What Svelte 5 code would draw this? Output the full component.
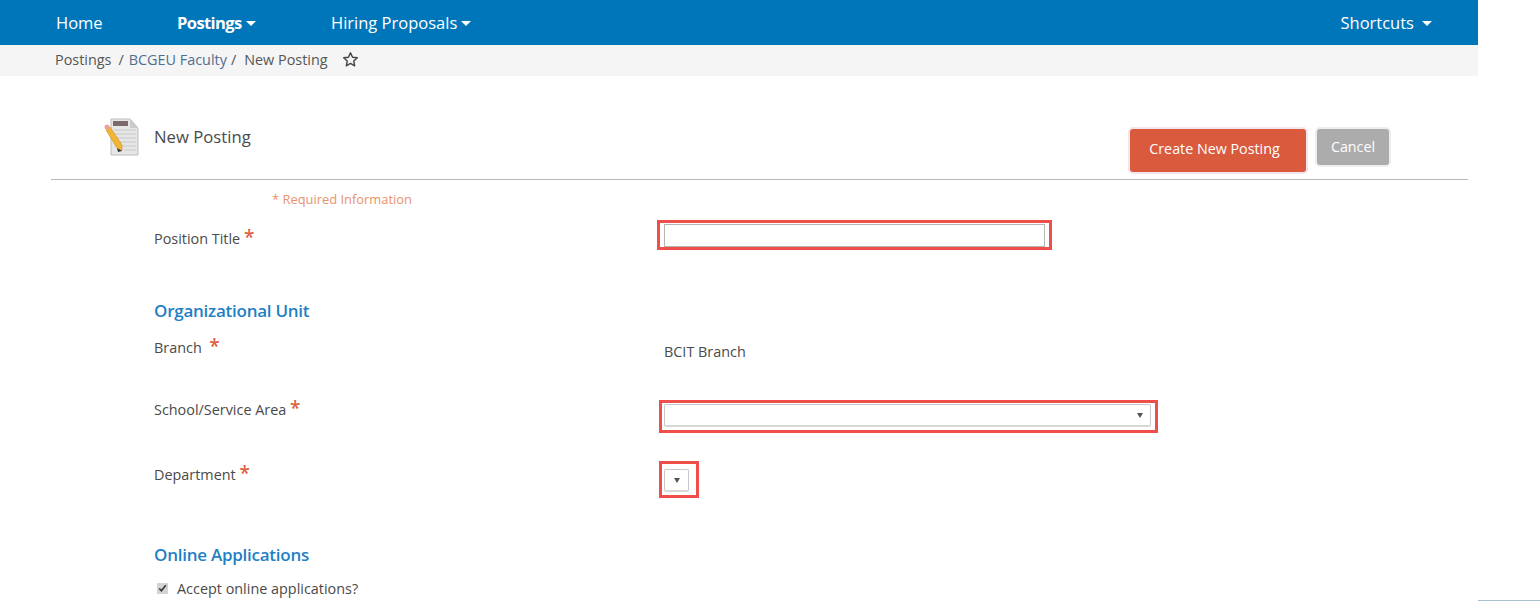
<script>
  let acceptOnline = true;
</script>

<div class="page">
  <main class="main">
    <nav class="topnav">
      <div class="nav-left">
        <a class="nav-home" href="#home">Home</a>
        <a class="nav-postings" href="#postings">Postings<span class="caret"></span></a>
        <a class="nav-hiring" href="#hiring">Hiring Proposals<span class="caret"></span></a>
      </div>
      <a class="nav-shortcuts" href="#shortcuts">Shortcuts<span class="caret wide"></span></a>
    </nav>

    <div class="breadcrumb">
      <span class="crumb">Postings</span>
      <span class="crumb sep">/</span>
      <span class="crumb link">BCGEU Faculty</span>
      <span class="crumb sep2">/</span>
      <span class="crumb current">New Posting</span>
      <svg class="star" viewBox="0 0 24 24" width="17" height="17" aria-hidden="true">
        <path d="M12 2.600l2.900 6.200 6.700.8-5 4.600 1.300 6.700L12 17.600l-5.900 3.300 1.300-6.700-5-4.600 6.700-.8z" fill="none" stroke="#444" stroke-width="2" stroke-linejoin="round" />
      </svg>
    </div>

    <header class="title-row">
      <div class="title">
        <svg class="doc-icon" viewBox="0 0 36 38" width="36" height="38" aria-hidden="true">
          <path d="M8 1h19l8 9v27H8z" fill="#e6e6e6" stroke="#bdbdbd" />
          <path d="M27 1v9h8z" fill="#cacaca" />
          <rect x="10" y="3" width="15" height="5" fill="#7b6a6c" />
          <path d="M11 12h22M11 16h22M11 20h22M17 24h16M19 28h14M21 32h12" stroke="#c4c8cc" stroke-width="1" />
          <path d="M3 12l4-3 12 18 0 6-5-3z" fill="#f2b632" stroke="#c98a1a" stroke-width=".6" />
          <path d="M14 30l5 3-4 1z" fill="#333" />
          <circle cx="4" cy="9" r="2.500" fill="#e8a0a0" />
        </svg>
        <h1>New Posting</h1>
      </div>
      <div class="actions">
        <button class="btn primary" type="button">Create New Posting</button>
        <button class="btn cancel" type="button">Cancel</button>
      </div>
    </header>

    <form class="form">
      <p class="required-note">* Required Information</p>

      <div class="row row-title">
        <span class="label">Position Title <b>*</b></span>
        <div class="highlight hl-title"><input type="text" /></div>
      </div>

      <h2 class="unit-heading">Organizational Unit</h2>

      <div class="row row-branch">
        <span class="label">Branch &nbsp;<b>*</b></span>
        <span class="value">BCIT Branch</span>
      </div>

      <div class="row row-school">
        <span class="label">School/Service Area <b>*</b></span>
        <div class="highlight hl-school">
          <div class="select wide-select"><span class="arrow"></span></div>
        </div>
      </div>

      <div class="row row-dept">
        <span class="label">Department <b>*</b></span>
        <div class="highlight hl-dept">
          <div class="select small-select"><span class="arrow"></span></div>
        </div>
      </div>

      <h2 class="online-heading">Online Applications</h2>
      <label class="check">
        <input type="checkbox" bind:checked={acceptOnline} />
        Accept online applications?
      </label>
    </form>
  </main>

  <aside class="side"><div class="side-line"></div></aside>
</div>

<style>
  :global(body) {
    margin: 0;
    background: #fff;
    font-family: 'Open Sans', sans-serif;
    color: #4a4a4a;
  }

  .page {
    display: flex;
    height: 612px;
    overflow: hidden;
  }

  .main {
    width: 1478px;
    flex: none;
  }

  .side {
    flex: 1;
  }

  .side-line {
    margin-top: 600px;
    height: 1px;
    background: #a9c0cf;
  }

  .topnav {
    height: 45px;
    background: #0076ba;
    display: flex;
    align-items: center;
    justify-content: space-between;
    padding: 0 46px 0 56px;
    font-size: 16.5px;
  }

  .topnav a {
    color: #fff;
    text-decoration: none;
  }

  .nav-left {
    display: flex;
  }

  .nav-home {
    width: 121px;
  }

  .nav-postings {
    width: 154px;
    font-weight: 700;
    letter-spacing: -0.6px;
  }

  .caret {
    display: inline-block;
    margin-left: 4px;
    vertical-align: 3px;
    border-top: 5px solid #fff;
    border-left: 5px solid transparent;
    border-right: 5px solid transparent;
  }

  .caret.wide {
    margin-left: 8px;
  }

  .breadcrumb {
    height: 31px;
    box-sizing: border-box;
    padding: 0 0 2px 55px;
    background: #f5f5f5;
    display: flex;
    align-items: center;
    font-size: 14.4px;
    color: #555;
  }

  .link {
    color: #4f6f8f;
  }

  .sep {
    margin: 0 5px 0 7px;
  }

  .sep2 {
    margin: 0 8px 0 4px;
  }

  .star {
    margin-left: 14px;
  }

  .title-row {
    height: 104px;
    margin: 0 10px 0 51px;
    border-bottom: 1px solid #b8b8b8;
    display: flex;
    justify-content: space-between;
    box-sizing: border-box;
  }

  .title {
    display: flex;
    align-items: flex-start;
    padding: 42px 0 0 52px;
    gap: 15px;
  }

  .doc-icon {
    flex: none;
  }

  h1 {
    margin: 8px 0 0;
    font-size: 16.7px;
    font-weight: 400;
    line-height: 22px;
    color: #4a4a4a;
  }

  .actions {
    display: flex;
    align-items: flex-start;
    gap: 11px;
    padding: 53px 79px 0 0;
  }

  .btn {
    border: 0;
    border-radius: 3px;
    color: #fff;
    font-family: inherit;
    font-size: 14.3px;
  }

  .primary {
    width: 176px;
    height: 43px;
    padding: 0 7px 5px 0;
    background: #da5a3e;
    box-shadow: 0 0 0 2px #f3e4ee;
  }

  .cancel {
    width: 72px;
    height: 36px;
    padding: 0 0 2px;
    background: #acacac;
    box-shadow: 0 0 0 2px #eeeef2;
  }

  .form {
    padding-left: 154px;
  }

  .required-note {
    margin: 0;
    padding: 10px 0 0 118px;
    font-size: 12.9px;
    line-height: 18px;
    color: #e8926c;
  }

  .row {
    display: grid;
    grid-template-columns: 503px auto;
    justify-content: start;
    align-items: start;
    font-size: 14.4px;
  }

  .label {
    line-height: 20px;
    color: #4a4a4a;
  }

  .label b {
    color: #dd5f40;
    font-size: 19px;
    font-weight: 600;
    line-height: 14px;
  }

  .row-title {
    margin-top: 12px;
  }

  .row-title .label {
    padding-top: 9px;
  }

  .highlight {
    border: 3px solid #ef4e4b;
    box-sizing: border-box;
  }

  .hl-title {
    width: 395px;
    height: 30px;
    padding: 1px 4px 0;
  }

  .hl-title input {
    display: block;
    width: 100%;
    height: 23px;
    box-sizing: border-box;
    margin: 0;
    border: 1px solid #b5b5b5;
    border-radius: 0;
    padding: 0;
    background: #fff;
  }

  .unit-heading,
  .online-heading {
    margin: 0;
    font-size: 17px;
    font-weight: 600;
    line-height: 24px;
    color: #1f7fc4;
    letter-spacing: -0.25px;
  }

  .unit-heading {
    margin-top: 49px;
  }

  .row-branch {
    margin-top: 15px;
  }

  .row-branch .value {
    grid-column: 2;
    padding: 4px 0 0 7px;
    line-height: 20px;
    color: #4a4a4a;
  }

  .row-school {
    margin-top: 38px;
    grid-template-columns: 505px auto;
  }

  .hl-school {
    width: 499px;
    height: 33px;
    padding: 1px 4px 0 2px;
  }

  .select {
    box-sizing: border-box;
    height: 23px;
    border: 1px solid #c8c8c8;
    border-bottom: 2px solid #d8d8d8;
    border-radius: 2px;
    display: flex;
    align-items: center;
    justify-content: flex-end;
  }

  .wide-select {
    padding-right: 7px;
  }

  .small-select {
    width: 25px;
    justify-content: center;
  }

  .arrow {
    border-top: 5px solid #555;
    border-left: 3px solid transparent;
    border-right: 3px solid transparent;
  }

  .row-dept {
    margin-top: 28px;
    grid-template-columns: 505px auto;
  }

  .row-dept .label {
    padding-top: 4px;
  }

  .hl-dept {
    width: 40px;
    height: 37px;
    padding: 5px 2px;
  }

  .online-heading {
    margin-top: 45px;
  }

  .check {
    display: flex;
    align-items: center;
    margin-top: 12px;
    font-size: 14.4px;
    line-height: 20px;
    color: #4a4a4a;
    gap: 9px;
    padding-left: 3px;
  }

  .check input {
    width: 11px;
    height: 11px;
    margin: 0 0 2px;
    accent-color: #d4d4d4;
  }
</style>
